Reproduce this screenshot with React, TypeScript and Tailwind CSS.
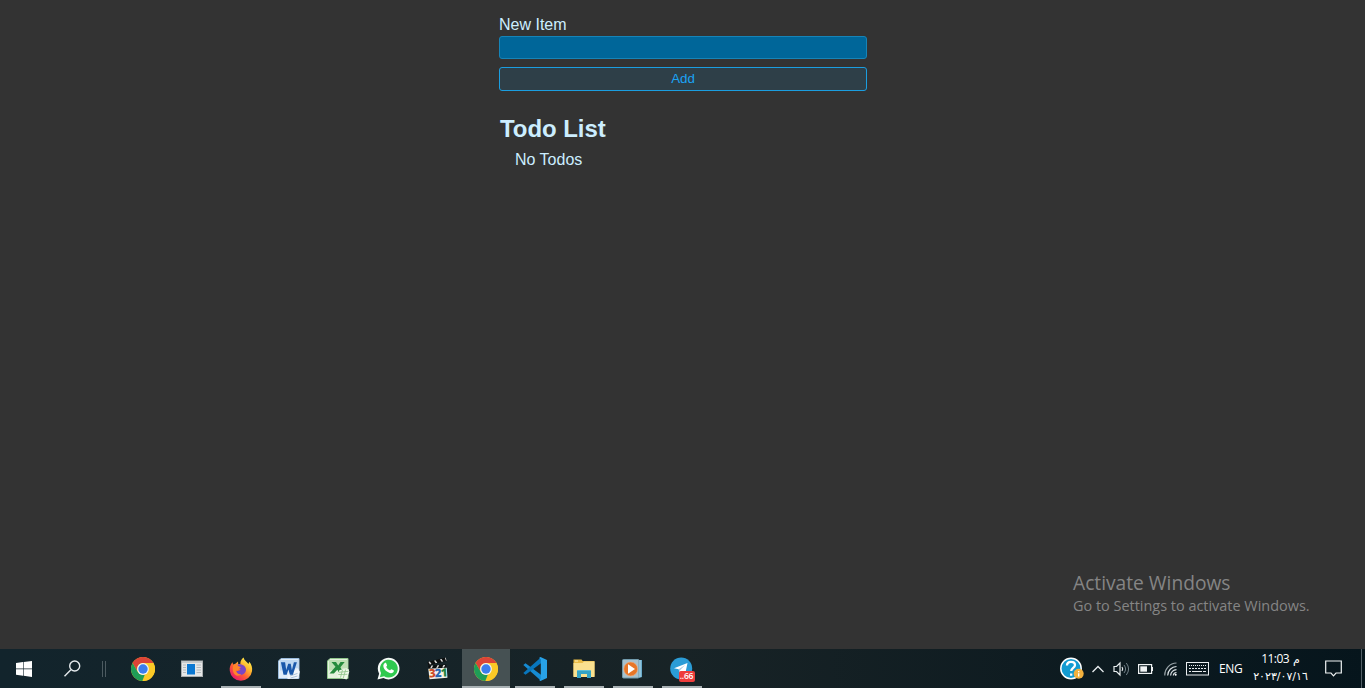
import type { ReactNode } from "react";

function ChromeIcon() {
  return (
    <svg width="24" height="24" viewBox="0 0 24 24">
      <circle cx="12" cy="12" r="12" fill="#fbc926" />
      <path d="M22.4 6H12a6 6 0 0 1 5.2 9L11.5 24A12 12 0 0 0 22.4 6Z" fill="#fbc926" />
      <path d="M1.6 6L6.8 15A6 6 0 0 1 12 6h10.4A12 12 0 0 0 1.6 6Z" fill="#db4437" />
      <path d="M1.6 6L6.8 15a6 6 0 0 0 7 2.7L11.3 24A12 12 0 0 1 1.6 6Z" fill="#1f9d57" />
      <circle cx="12" cy="12" r="5.9" fill="#f0f3f5" />
      <circle cx="12" cy="12" r="4.7" fill="#3b7ded" />
    </svg>
  );
}

function WindowIcon() {
  return (
    <svg width="22" height="18" viewBox="0 0 22 18">
      <rect x=".5" y="1" width="21" height="15.5" fill="#e5e7e7" stroke="#a9adaf" />
      <rect x="1" y="1.5" width="20" height="1.3" fill="#bfc3c5" />
      <rect x="6" y="4" width="8" height="10.5" fill="#0b78d2" />
      <path d="M2 5h3M2 7.5h3M2 10h3M2 12.5h3M15.5 5H20M15.5 7.5H20M15.5 10H20M15.5 12.5H20" stroke="#b4b9bc" />
    </svg>
  );
}

function FirefoxIcon() {
  return (
    <svg width="24" height="24" viewBox="0 0 24 24">
      <defs>
        <linearGradient id="fox" x1=".85" y1=".1" x2=".2" y2=".9">
          <stop offset="0" stopColor="#fff04a" />
          <stop offset=".35" stopColor="#ffb02e" />
          <stop offset=".65" stopColor="#ff5a36" />
          <stop offset="1" stopColor="#e81e69" />
        </linearGradient>
      </defs>
      <path d="M3.6 5.2L4 7.4 6.3 6.8 9 4.5 9.2 7 11.3 6.9C11.2 3.8 13 1.3 14.6.4 15 3.2 18 4.7 19.5 7L20.2 4.8C22.6 7.4 23.6 11 23 14.2A11.2 11.2 0 0 1 .8 14C.3 10.8 1.3 7.3 3.6 5.2Z" fill="url(#fox)" />
      <path d="M8.5 7.7c4-1.3 8.7 1.2 8.5 5.4-.3 3.4-3 5.1-5.6 4.8-2.8-.3-4.5-2.3-4.2-4.5.7.7 2.1.8 3.2.2l1.2-1.5c-1 0-2.2-.6-3.1-1.5Z" fill="#7a46c4" />
      <path d="M4.4 8.3c2-.9 4.1-.5 5.1 1l2.2.8c-.2 1.2-1.2 1.3-2.1 1.8-.6 1.7-1.6 1.9-2.5 1.7.2 2.8 2.9 4.2 5.2 3.6-3.2 3.1-7.6.9-8.3-3.3-.4-2-.3-4 .4-5.6Z" fill="#ff852a" />
    </svg>
  );
}

function WordIcon() {
  return (
    <svg width="22" height="22" viewBox="0 0 22 22">
      <path d="M3 .5h18v20H.5V3Z" fill="#e1edf9" stroke="#9bbbdc" />
      <path d="M2 2h18v8L2 12.5Z" fill="#a5c9eb" opacity=".6" />
      <path d="M13 13.5l7.3-2.5 1.5 2.7-1.7 6.8L9.5 21v-3Z" fill="#f1f6fb" />
      <path d="M12 18l7.5-2.6M12.5 20l7-2" stroke="#8ba9ca" strokeWidth=".7" />
      <path d="M2.9 4.3h4.2L8.2 12l2-6.2h2.5l1.2 6.2 2-7.7h3l-4 12.5h-3l-1.5-5.2-1.7 5.2H5.5Z" fill="#1958aa" />
    </svg>
  );
}

function ExcelIcon() {
  return (
    <svg width="23" height="22" viewBox="0 0 23 22">
      <path d="M3 .5h18v20H.5V3Z" fill="#e4f2de" stroke="#91c68c" />
      <path d="M2 2h18v8L2 12.5Z" fill="#aad69e" opacity=".65" />
      <path d="M4.5 4H9l2.2 3.4L13.5 4h4.2l-4.3 5.3 3.4 6.2h-4.3l-2.2-3.8-3.4 3.8H2.5l6-6.7Z" fill="#268b3d" />
      <path d="M12.5 12l9-1 .8 2.8-2.7 7.7-9.5-2.7Z" fill="#edf7e7" />
      <path d="M12 14.3l9.5-1M11.3 16.5l9-.2M15.5 11.8l-2 7.7M18.7 11.5l-2.5 8.8" stroke="#8bc285" strokeWidth=".8" />
    </svg>
  );
}

function WhatsAppIcon() {
  return (
    <svg width="23" height="23" viewBox="0 0 24 24">
      <path d="M.5 23.5l1.7-6A11.3 11.3 0 1 1 6.7 22Z" fill="#f7faf8" />
      <path d="M3 21l1.2-4.4A9.3 9.3 0 1 1 7.4 20Z" fill="#2fc94f" />
      <path d="M8.2 6.3c.5-.4 1.2-.3 1.4.2l.9 2.2c.2.5-.8 1.2-.8 1.7.7 1.6 2 2.8 3.7 3.5.6 0 1.1-1.3 1.6-1.1l2.3 1.1c.5.3.2 1.5-.3 2-2 1.9-4.8.7-6.6-.7-2-1.5-4-4.2-3.8-6.2.1-1.1.8-2 1.6-2.7Z" fill="#fff" />
    </svg>
  );
}

function ClapperIcon() {
  return (
    <span className="relative block h-[23px] w-[21px]">
      <svg width="21" height="23" viewBox="0 0 21 23">
        <path d="M.5 5L18.7.6l.9 3.5L1.3 8.5Z" fill="#0d0f0f" />
        <path d="M1.5 5l1.4-.4L4.5 7l-1.6.4ZM7 3.7l1.5-.4 1.8 2.5-1.6.4ZM13 2.3l1.6-.4 1.6 2.5-1.6.4ZM18 1l.8 2.6.8.5-.9-3.5Z" fill="#dedede" />
        <path d="M1.2 8.5l18-1v3.6L1.5 12Z" fill="#0d0f0f" />
        <path d="M4.5 8.6l1.7-.1-1.3 2.6-1.7.1ZM10.5 8.3l1.7-.1-1.3 2.6-1.7.1ZM16.5 8l1.7-.1-1.3 2.6-1.7.1Z" fill="#dedede" />
        <path d="M1.3 11.7l18.5-1 .6 10.1L2.5 22.3Z" fill="#f4f2eb" />
      </svg>
      <span className="absolute top-[10px] left-[2px] -rotate-3 font-['Open_Sans',sans-serif] text-[11.5px] leading-[12px] font-extrabold tracking-[-0.9px]">
        <span className="text-[#cf4c26]">3</span><span className="text-[#2566b2]">2</span><span className="text-[#238343]">1</span>
      </span>
    </span>
  );
}

function CodeIcon() {
  return (
    <svg width="24" height="24" viewBox="0 0 24 24">
      <path d="M.3 8L2.5 6.2 18 17.8v6Z" fill="#168bd2" />
      <path d="M.3 16l2.2 1.8L18 6.2v-6Z" fill="#0876bd" />
      <path d="M17.5.1L24 3v18l-6.5 2.9-1.4-.8 1.7-1.4V2.3L16 1Z" fill="#28a2e8" />
    </svg>
  );
}

function FolderIcon() {
  return (
    <svg width="22" height="19" viewBox="0 0 22 19">
      <path d="M.5.5h8L9.7 2h11.8v15.5H.5Z" fill="#e9bb47" />
      <path d="M.5 4h9L11 2.5h10.5V18H.5Z" fill="#fae08f" />
      <path d="M2 2h3" stroke="#fff0ba" />
      <path d="M4 19v-7.5h14V19h-4v-4H8v4Z" fill="#35a3c5" />
      <path d="M4.5 11.5h13" stroke="#5dbfd7" />
    </svg>
  );
}

function MediaIcon() {
  return (
    <svg width="21" height="20" viewBox="0 0 21 20">
      <path d="M15 1h5v17l-3 1Z" fill="#69a9c8" />
      <rect x=".5" y=".5" width="16.5" height="18.5" rx="1" fill="#a9c1cc" stroke="#719bad" />
      <path d="M18 1v17" stroke="#b8deee" />
      <circle cx="8.7" cy="10" r="6.9" fill="#e87627" stroke="#f4ab78" strokeWidth=".6" />
      <path d="M6 5.2l7 4.8-7 4.8Z" fill="#fff" />
    </svg>
  );
}

function TelegramIcon() {
  return (
    <span className="relative block h-6 w-6">
      <svg width="23" height="23" viewBox="0 0 23 23">
        <circle cx="11.2" cy="11.5" r="11" fill="#2b9cd6" />
        <path d="M4 11.2L17.5 6l-2.3 11-4-3-1.7 1.8-.8-3.5Z" fill="#fff" />
        <path d="M8.7 12.3l6.4-4.2-5.3 5.3-.3 2.4Z" fill="#a8cbe0" />
      </svg>
      <span className="absolute top-[14px] left-[9px] flex h-[11px] w-[16px] items-center justify-center rounded-[2px] bg-[#ee3d3c] font-['Open_Sans',sans-serif] text-[8.5px] leading-none font-semibold tracking-[-0.2px] text-white">
        ..66
      </span>
    </span>
  );
}

function Task({ children, running, active }: { children: ReactNode; running?: boolean; active?: boolean }) {
  return (
    <div className={active ? "flex h-full w-[49px] flex-col items-center border-r border-[#172326] bg-[#465153]" : "flex h-full w-[49px] flex-col items-center"}>
      <div className="flex min-h-0 flex-1 items-center justify-center pt-[2px]">{children}</div>
      <div className={active ? "h-[2px] w-full bg-[#a9b1b4]" : running ? "h-[2px] w-10 bg-[#a9b1b4]" : "h-[2px] w-10"} />
    </div>
  );
}

function Taskbar() {
  return (
    <footer className="flex h-[39px] shrink-0 items-stretch bg-linear-to-r from-[#12242c] via-[#182326] via-50% to-[#06151c] text-white">
      <div className="flex w-12 items-center justify-center">
        <svg width="16" height="16" viewBox="0 0 16 16" fill="#fff">
          <path d="M0 2l7-.9v6.4H0ZM7.6 1L16 0v7.5H7.6ZM0 8.3h7v6.4L0 13.8ZM7.6 8.3H16V16l-8.4-1.2Z" />
        </svg>
      </div>
      <div className="flex w-12 items-center justify-center">
        <svg width="17" height="17" viewBox="0 0 17 17" fill="none" stroke="#e6ebed" strokeWidth="1.4">
          <circle cx="10.7" cy="6" r="5" />
          <path d="M6.9 9.8L.5 16.2" />
        </svg>
      </div>
      <div className="flex w-[22px] items-center justify-center pr-[6px]">
        <div className="h-4 w-1 border-x border-[#4c5a60]" />
      </div>
      <nav className="flex">
        <Task><ChromeIcon /></Task>
        <Task><WindowIcon /></Task>
        <Task running><FirefoxIcon /></Task>
        <div className="-ml-px flex gap-px">
          <Task><WordIcon /></Task>
          <Task><ExcelIcon /></Task>
        </div>
        <div className="ml-px flex">
          <Task><WhatsAppIcon /></Task>
          <Task><ClapperIcon /></Task>
          <Task active><ChromeIcon /></Task>
        </div>
        <div className="-ml-px flex">
          <Task running><CodeIcon /></Task>
          <Task running><FolderIcon /></Task>
          <Task running><MediaIcon /></Task>
          <Task running><TelegramIcon /></Task>
        </div>
      </nav>
      <div className="ml-auto flex items-center">
        <svg className="mr-[8px]" width="24" height="24" viewBox="0 0 24 24">
          <circle cx="11" cy="11.5" r="10.2" fill="#139bd1" stroke="#fff" strokeWidth="1.5" />
          <path d="M7 8.5c0-2.3 1.7-3.7 4-3.7s4 1.2 4 3.2c0 2.8-3.8 2.9-3.8 6m0 2.5v2.2" fill="none" stroke="#fff" strokeWidth="2.3" />
          <circle cx="18.7" cy="16.8" r="5" fill="#f4b13d" />
          <path d="M18.7 14v1.3m0 1v3.3" stroke="#fff" strokeWidth="1.3" />
        </svg>
        <svg className="mr-[9px]" width="12" height="8" viewBox="0 0 12 8" fill="none" stroke="#e8edef" strokeWidth="1.3">
          <path d="M.5 7L6 1.5 11.5 7" />
        </svg>
        <svg className="mr-[8px]" width="17" height="16" viewBox="0 0 17 16" fill="none">
          <path d="M1 5.5h2.5L7 2v12l-3.5-3.5H1Z" stroke="#e8edef" strokeWidth="1.2" />
          <path d="M9 6q1.5 2 0 4" stroke="#e8edef" strokeWidth="1.2" />
          <path d="M11 4q3.2 4 0 8M13.3 2q4.6 6 0 12" stroke="#718087" />
        </svg>
        <svg className="mr-[10px]" width="16" height="10" viewBox="0 0 16 10" fill="none">
          <rect x=".6" y=".6" width="13" height="8.8" stroke="#f0f3f4" strokeWidth="1.2" />
          <path d="M2.3 2.3h6.7v5.4H2.3Z" fill="#f0f3f4" />
          <path d="M14.5 3v4" stroke="#f0f3f4" />
        </svg>
        <svg className="mr-[9px]" width="13" height="14" viewBox="0 0 13 14" fill="none" stroke="#dbe1e4" strokeWidth="1.2">
          <path d="M.8 13.5A12 12 0 0 1 12.5 1" stroke="#99a4a9" />
          <path d="M3.7 13.5a9 9 0 0 1 8.8-9M6.6 13.5a6 6 0 0 1 5.9-5.8M9.3 13.5a3.3 3.3 0 0 1 3.2-3" />
          <circle cx="11.7" cy="12.7" r="1" fill="#fff" stroke="none" />
        </svg>
        <svg className="mr-[10px]" width="23" height="14" viewBox="0 0 23 14" fill="none" stroke="#e9edef">
          <rect x=".5" y=".5" width="22" height="12.5" />
          <path d="M3 3.5h18" strokeDasharray="1 1" />
          <path d="M3 6.5h18" strokeDasharray="2 1" />
          <path d="M3 9.5h2m1 0h10m1 0h3" />
        </svg>
        <span className="mr-[10px] w-[24px] font-['Open_Sans',sans-serif] text-[12px] leading-4 tracking-[-0.35px]">ENG</span>
        <div className="mr-[17px] flex w-[55px] flex-col items-center pb-[2px] text-[12px] leading-[17px] whitespace-nowrap">
          <span className="flex gap-1 font-['Open_Sans','DejaVu_Sans',sans-serif] tracking-[-0.55px]"><span>11:03</span><span className="text-[11px]">م</span></span>
          <bdo dir="ltr" className="block pt-px font-['DejaVu_Sans',sans-serif] text-[11px]">٢٠٢٣/٠٧/١٦</bdo>
        </div>
        <svg className="mr-[19px]" width="17" height="17" viewBox="0 0 17 17" fill="none" stroke="#f0f3f4" strokeWidth="1.2">
          <path d="M.7 1h15.6v12H11l-2.5 2.8L6 13H.7Z" />
        </svg>
        <div className="h-full w-[4px] border-l border-[#536067]" />
      </div>
    </footer>
  );
}

export default function App() {
  return (
    <div className="flex h-screen flex-col overflow-hidden bg-[#333333] font-['Liberation_Sans',Arial,sans-serif]">
      <main className="flex min-h-0 flex-1 flex-col">
        <section className="mx-auto w-[368px] pt-[16px] text-[#cceeff]">
          <form className="flex flex-col" onSubmit={(event) => event.preventDefault()}>
            <label htmlFor="item" className="h-[20px] pl-[0.5px] text-[16px] leading-[18px]">New Item</label>
            <input id="item" className="h-[23px] rounded-[3px] border border-[#1684b8] bg-[#006699] px-2 text-sm outline-none" />
            <button className="mt-[8px] h-[24px] rounded-[3px] border border-[#1b9ee0] bg-[#2e3f48] pl-[1px] text-[13.333px] leading-none text-[#1ba3f5]">Add</button>
          </form>
          <h1 className="mt-[24px] pl-[1.5px] text-[24px] leading-[28px] font-bold tracking-[-0.06px]">Todo List</h1>
          <p className="mt-[8px] pl-[16.5px] text-[16px] leading-[18px]">No Todos</p>
        </section>
        <aside className="mt-auto mr-[48px] mb-[33px] w-[244px] self-end font-['Open_Sans',sans-serif] whitespace-nowrap text-[#858585]">
          <p className="mb-px text-[19.2px] leading-[24px]">Activate Windows</p>
          <p className="text-[14.45px] leading-[20px]">Go to Settings to activate Windows.</p>
        </aside>
      </main>
      <Taskbar />
    </div>
  );
}
